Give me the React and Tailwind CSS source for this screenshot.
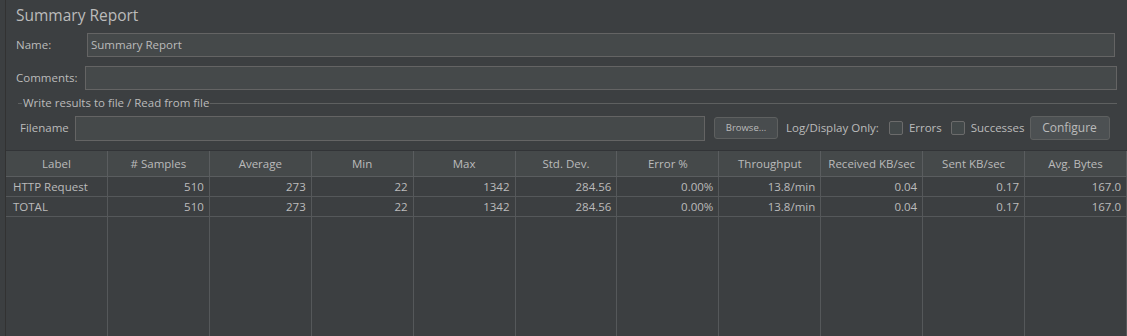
import React from "react"

const cols = ["Label", "# Samples", "Average", "Min", "Max", "Std. Dev.", "Error %", "Throughput", "Received KB/sec", "Sent KB/sec", "Avg. Bytes"]
const rows = [
  ["HTTP Request", "510", "273", "22", "1342", "284.56", "0.00%", "13.8/min", "0.04", "0.17", "167.0"],
  ["TOTAL", "510", "273", "22", "1342", "284.56", "0.00%", "13.8/min", "0.04", "0.17", "167.0"],
]

const font = { fontFamily: '"Open Sans", "Noto Sans", sans-serif' }

function Checkbox({ label }) {
  return (
    <label className="flex items-center gap-[6px] shrink-0">
      <span className="w-[14px] h-[14px] border border-[#6b6b6b] rounded-[2px] bg-[#43494a]" />
      <span>{label}</span>
    </label>
  )
}

export default function App() {
  return (
    <div className="w-[1127px] h-[336px] bg-[#3c3f41] text-[#bbbbbb] text-[11.5px] overflow-hidden flex whitespace-nowrap" style={font}>
      <div className="w-[6px] border-r border-[#323232] shrink-0" />
      <div className="flex-1 min-w-0 flex flex-col">
        <div className="pl-[10px] pr-[10px]">
          <div className="text-[15.5px] h-[30px] pt-[4px] leading-[22px]">Summary Report</div>
          <div className="flex items-center h-[24px] mt-[3px]">
            <span className="w-[71px] shrink-0">Name:</span>
            <div className="flex-1 h-[24px] mr-[2px] bg-[#45494a] border border-[#646464] flex items-center px-[3px]">Summary Report</div>
          </div>
          <div className="flex items-center h-[24px] mt-[9px]">
            <span className="w-[69px] shrink-0">Comments:</span>
            <div className="flex-1 h-[24px] bg-[#45494a] border border-[#646464]" />
          </div>
          <div className="flex items-center mt-[4px] ml-[2px] h-[18px]">
            <span className="w-[4px] border-t border-[#5e6060]" />
            <span className="px-[1px]">Write results to file / Read from file</span>
            <span className="flex-1 border-t border-[#5e6060]" />
          </div>
          <div className="flex items-center h-[26px] mt-[3px] pl-[4px] pr-[5px]">
            <span className="w-[55px] shrink-0">Filename</span>
            <div className="w-[630px] shrink-0 h-[25px] bg-[#45494a] border border-[#646464]" />
            <div className="ml-[9px] shrink-0 w-[64px] h-[22px] rounded-[3px] border border-[#5e6060] bg-[#484c4e] flex items-center justify-center text-[9.5px]">Browse...</div>
            <span className="ml-[8px] shrink-0">Log/Display Only:</span>
            <div className="ml-[10px]"><Checkbox label="Errors" /></div>
            <div className="ml-[9px]"><Checkbox label="Successes" /></div>
            <div className="ml-[5px] shrink-0 w-[80px] h-[24px] rounded-[3px] border border-[#5e6060] bg-[#4c5052] flex items-center justify-center text-[12px]">Configure</div>
          </div>
        </div>
        <div className="mt-[9px] flex-1 grid grid-cols-11 grid-rows-[26px_20px_20px_1fr] border-t border-[#323437]">
          {cols.map((c) => (
            <div key={c} className="bg-[#45494a] border-r border-b border-[#5a5d5f] flex items-center justify-center min-w-0">{c}</div>
          ))}
          {rows.map((r, i) =>
            r.map((v, j) => (
              <div key={i + "-" + j} className={"border-r border-b border-[#55585a] flex items-center min-w-0 " + (j === 0 ? "justify-start px-[7px]" : "justify-end px-[5px]")}>{v}</div>
            ))
          )}
          {cols.map((c) => (
            <div key={"e" + c} className="border-r border-[#55585a]" />
          ))}
        </div>
      </div>
    </div>
  )
}
